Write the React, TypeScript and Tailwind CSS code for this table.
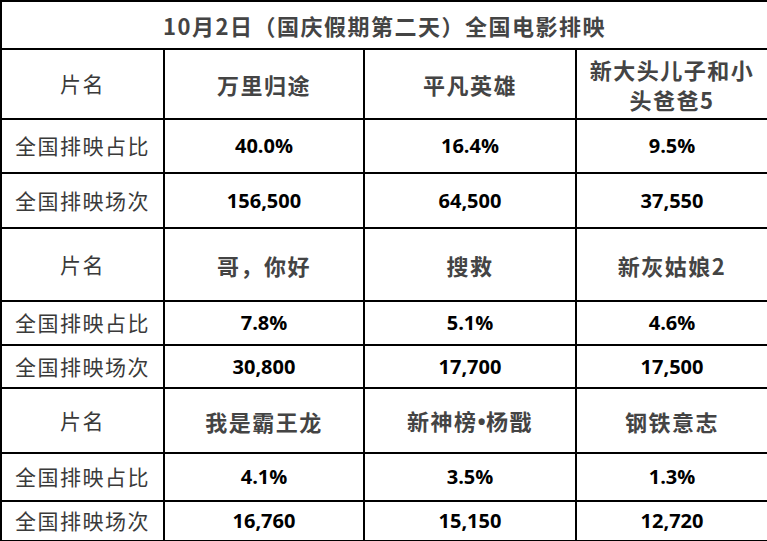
const rows: { names: (string | string[])[]; share: string[]; shows: string[]; h: number[] }[] = [
  {
    names: ["万里归途", "平凡英雄", ["新大头儿子和小", "头爸爸5"]],
    share: ["40.0%", "16.4%", "9.5%"],
    shows: ["156,500", "64,500", "37,550"],
    h: [70, 54, 55],
  },
  {
    names: ["哥，你好", "搜救", "新灰姑娘2"],
    share: ["7.8%", "5.1%", "4.6%"],
    shows: ["30,800", "17,700", "17,500"],
    h: [73, 44, 43],
  },
  {
    names: ["我是霸王龙", ["新神榜", "杨戬"], "钢铁意志"],
    share: ["4.1%", "3.5%", "1.3%"],
    shows: ["16,760", "15,150", "12,720"],
    h: [65, 48, 40],
  },
];

const cell = "border-2 border-black text-center align-middle p-0";
const label = "text-[21px] text-[#3a3a3a] tracking-[1.5px]";
const num = "text-[20px] font-bold text-black font-['Open_Sans','Noto_Sans_CJK_SC',sans-serif]";
const title = "text-[22px] font-bold text-[#444] tracking-[1.5px] leading-[30px]";

function Name({ n, idx }: { n: string | string[]; idx: number }) {
  if (!Array.isArray(n)) return <>{n}</>;
  if (idx === 2)
    return (
      <>
        {n[0]}
        <br />
        {n[1]}
      </>
    );
  return (
    <>
      {n[0]}
      <span className="font-['Open_Sans',sans-serif] tracking-normal">•</span>
      {n[1]}
    </>
  );
}

export default function App() {
  return (
    <div className="w-[767px] h-[541px] bg-white font-['Noto_Sans_CJK_SC','Noto_Sans',sans-serif]">
      <table className="w-[767px] table-fixed border-collapse">
        <colgroup>
          <col className="w-[163px]" />
          <col className="w-[200px]" />
          <col className="w-[212px]" />
          <col className="w-[192px]" />
        </colgroup>
        <tbody>
          <tr className="h-[48px]">
            <td colSpan={4} className={`${cell} ${title}`}>
              10月2日（国庆假期第二天）全国电影排映
            </td>
          </tr>
          {rows.map((r, i) => (
            <>
              <tr key={`n${i}`} style={{ height: r.h[0] }}>
                <td className={`${cell} ${label}`}>片名</td>
                {r.names.map((n, j) => (
                  <td key={j} className={`${cell} ${title}`}>
                    <Name n={n} idx={j} />
                  </td>
                ))}
              </tr>
              <tr key={`s${i}`} style={{ height: r.h[1] }}>
                <td className={`${cell} ${label}`}>全国排映占比</td>
                {r.share.map((v, j) => (
                  <td key={j} className={`${cell} ${num}`}>
                    {v}
                  </td>
                ))}
              </tr>
              <tr key={`c${i}`} style={{ height: r.h[2] }}>
                <td className={`${cell} ${label}`}>全国排映场次</td>
                {r.shows.map((v, j) => (
                  <td key={j} className={`${cell} ${num}`}>
                    {v}
                  </td>
                ))}
              </tr>
            </>
          ))}
        </tbody>
      </table>
    </div>
  );
}
